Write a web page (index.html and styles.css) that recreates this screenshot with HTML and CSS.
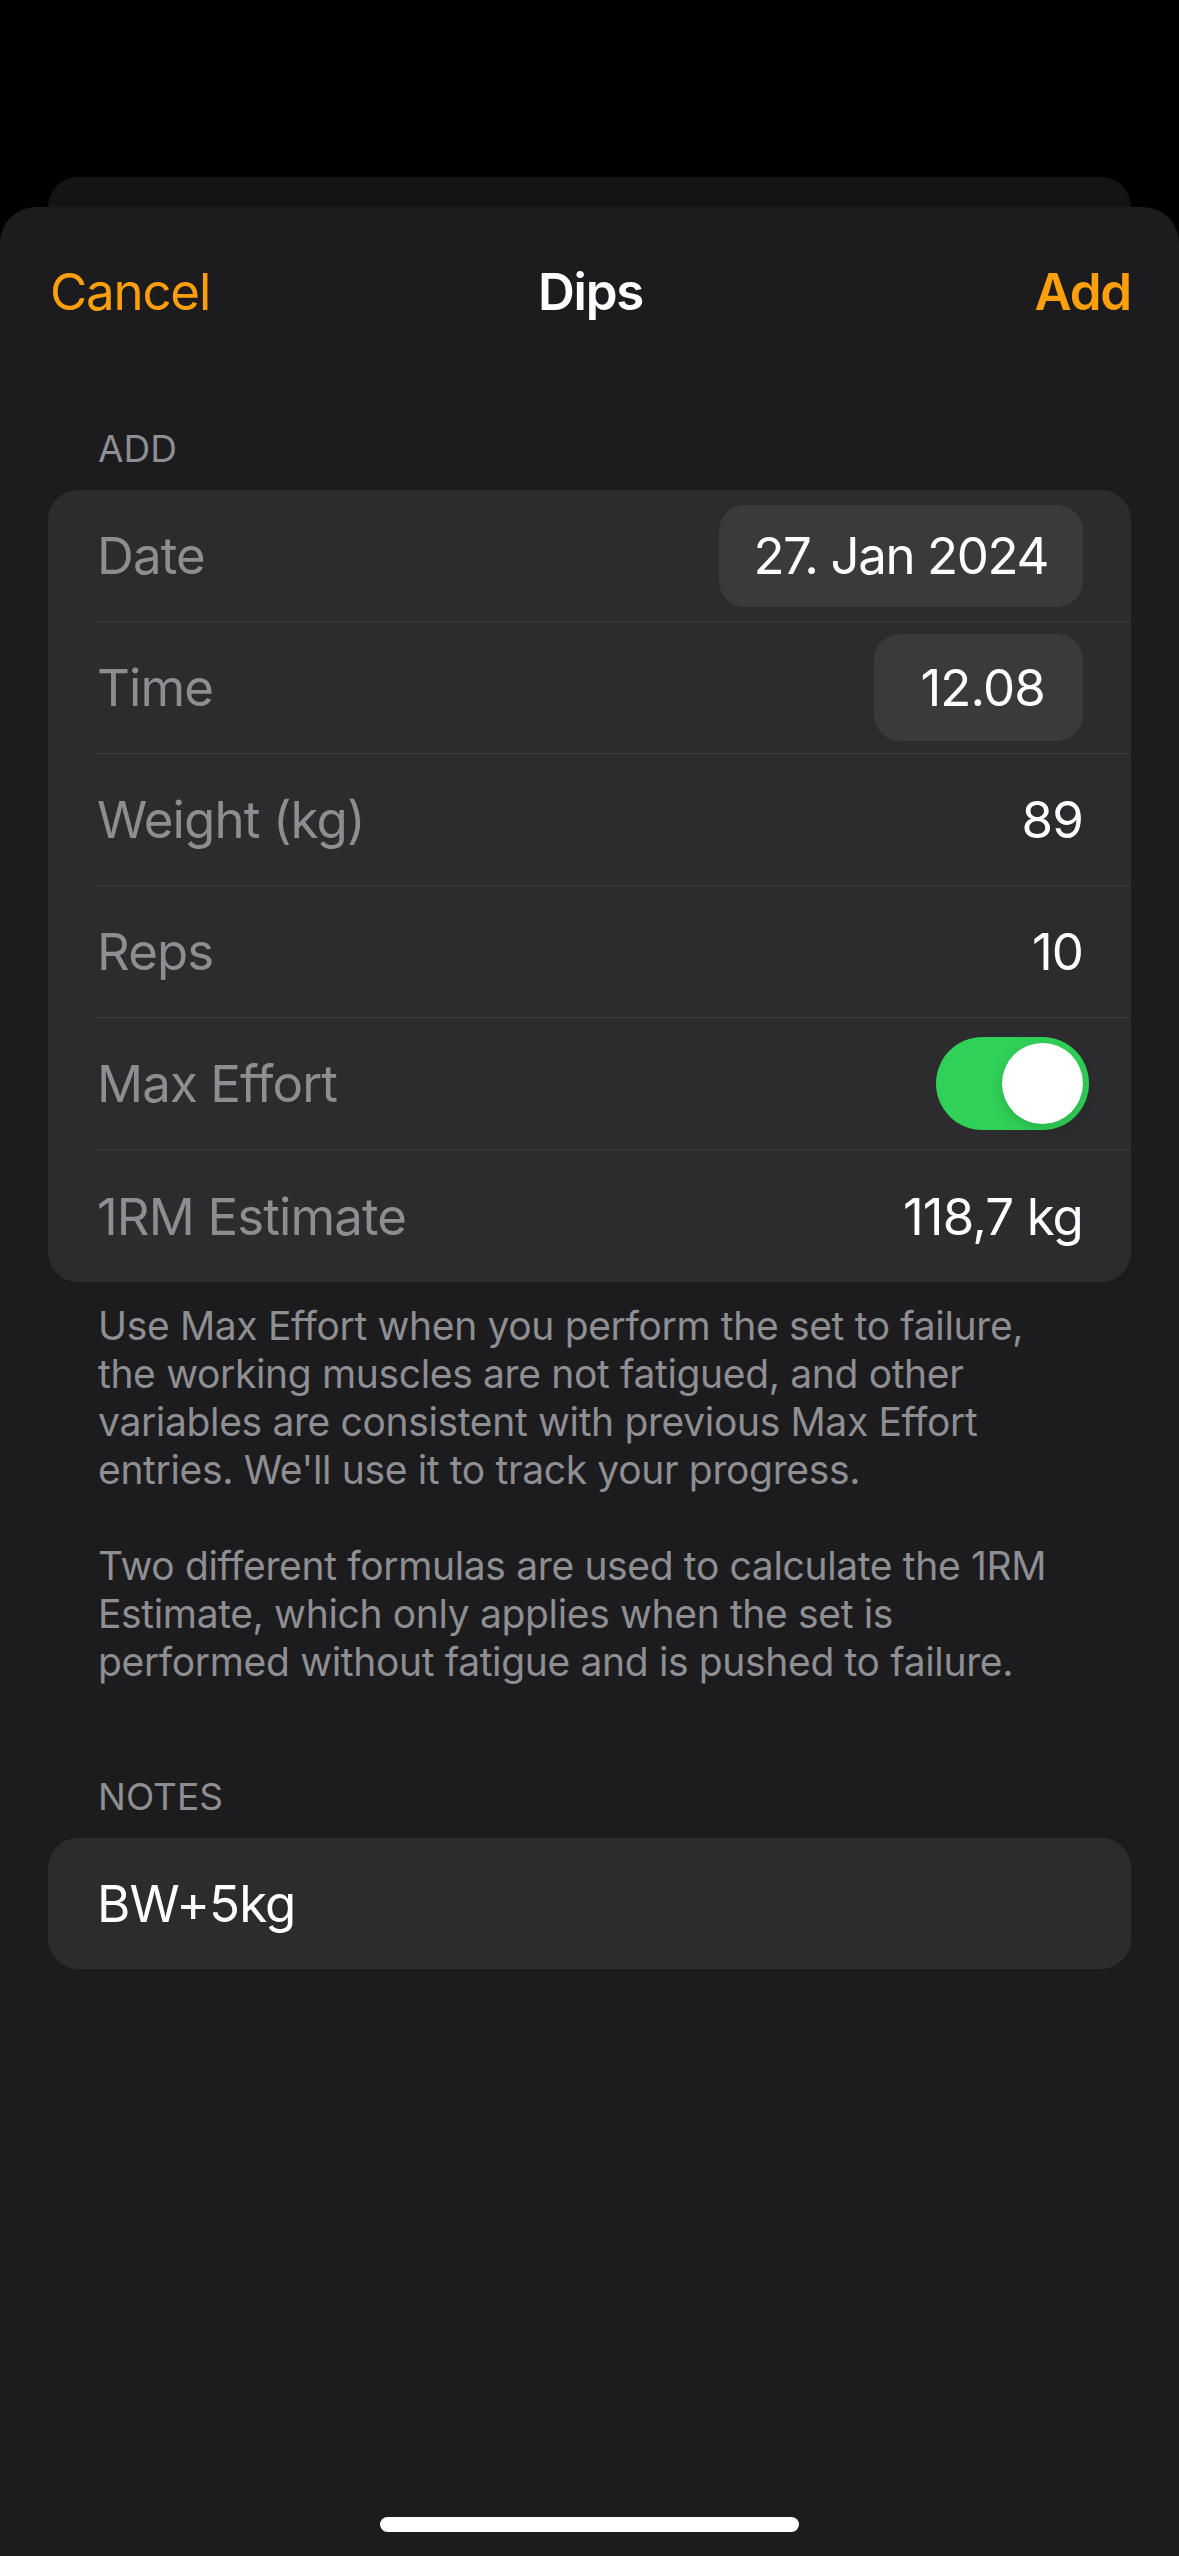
FILE: index.html
```html
<!DOCTYPE html>
<html lang="en">
<head>
<meta charset="utf-8">
<title>Dips</title>
<link rel="stylesheet" href="styles.css">
</head>
<body>
<div class="screen">
  <div class="back-card"></div>
  <div class="sheet">
    <div class="nav">
      <span class="nav-btn nav-left">Cancel</span>
      <span class="nav-title">Dips</span>
      <span class="nav-btn nav-btn-strong nav-right">Add</span>
    </div>

    <div class="section-header">ADD</div>
    <div class="card">
      <div class="row"><div class="row-inner">
        <span class="label">Date</span>
        <span class="pill pill-date">27. Jan 2024</span>
      </div></div>
      <div class="row"><div class="row-inner">
        <span class="label">Time</span>
        <span class="pill pill-time">12.08</span>
      </div></div>
      <div class="row"><div class="row-inner">
        <span class="label">Weight (kg)</span>
        <span class="value">89</span>
      </div></div>
      <div class="row"><div class="row-inner">
        <span class="label">Reps</span>
        <span class="value">10</span>
      </div></div>
      <div class="row"><div class="row-inner">
        <span class="label">Max Effort</span>
        <span class="switch"><span class="knob"></span></span>
      </div></div>
      <div class="row"><div class="row-inner">
        <span class="label">1RM Estimate</span>
        <span class="value">118,7 kg</span>
      </div></div>
    </div>
    <div class="footer">
      <p>Use Max Effort when you perform the set to failure,<br>the working muscles are not fatigued, and other<br>variables are consistent with previous Max Effort<br>entries. We'll use it to track your progress.</p>
      <p>Two different formulas are used to calculate the 1RM<br>Estimate, which only applies when the set is<br>performed without fatigue and is pushed to failure.</p>
    </div>

    <div class="section-header section-header-notes">NOTES</div>
    <div class="card">
      <div class="note">BW+5kg</div>
    </div>

    <div class="home-indicator"></div>
  </div>
</div>
</body>
</html>
```

FILE: styles.css
```css
* { box-sizing: border-box; }

html, body {
  margin: 0;
  padding: 0;
  background: #000;
}

body {
  font-family: Inter, "Noto Sans", "Liberation Sans", sans-serif;
  color: #fff;
}

.screen {
  width: 1179px;
  height: 2556px;
  overflow: hidden;
  display: flex;
  flex-direction: column;
  padding-top: 177px;
}

.back-card {
  height: 30px;
  margin: 0 48px;
  background: #141414;
  border-radius: 30px 30px 0 0;
  flex: none;
}

.sheet {
  flex: 1;
  background: #1c1c1e;
  border-radius: 36px 36px 0 0;
  display: flex;
  flex-direction: column;
}

.nav {
  display: grid;
  grid-template-columns: 1fr auto 1fr;
  align-items: center;
  padding: 51px 48px 0 50px;
  height: 119px;
  font-size: 51px;
  line-height: 60px;
  letter-spacing: -1.2px;
}

.nav-btn { color: #ff9f0a; }
.nav-left { justify-self: start; }
.nav-right { justify-self: end; }
.nav-btn-strong { font-weight: 600; }
.nav-title {
  font-weight: 600;
  color: #fff;
}

.section-header {
  margin-top: 101px;
  padding-left: 98px;
  font-size: 37px;
  line-height: 44px;
  color: #8e8e93;
}

.card {
  margin: 19px 48px 0;
  background: #2c2c2e;
  border-radius: 30px;
  overflow: hidden;
}

.row {
  padding-left: 49px;
}

.row-inner {
  height: 132px;
  display: flex;
  align-items: center;
  justify-content: space-between;
  padding-right: 48px;
  border-bottom: 1px solid #3d3d40;
  font-size: 51px;
  letter-spacing: -0.9px;
}

.row:last-child .row-inner { border-bottom: none; }

.label { color: #8d8d92; }

.value { color: #fff; }

.pill {
  display: inline-flex;
  align-items: center;
  background: #3a3a3c;
  border-radius: 26px;
  color: #fff;
}

.pill-date {
  height: 102px;
  padding: 0 35px 0 34px;
  letter-spacing: -1.4px;
}

.pill-time {
  height: 107px;
  padding: 0 38px 0 47px;
}

.switch {
  width: 153px;
  height: 93px;
  border-radius: 47px;
  background: #30d158;
  margin-right: -6px;
  display: flex;
  align-items: center;
  justify-content: flex-end;
  padding-right: 6px;
}

.knob {
  width: 81px;
  height: 81px;
  border-radius: 50%;
  background: #fff;
  box-shadow: 0 5px 14px rgba(0, 0, 0, 0.15), 0 0 1px rgba(0, 0, 0, 0.1);
}

.footer {
  padding: 20px 60px 0 98px;
  font-size: 39px;
  line-height: 48px;
  color: #8e8e93;
  letter-spacing: -0.35px;
}

.footer p { margin: 0 0 48px; white-space: nowrap; }
.footer p:last-child { margin-bottom: 0; }

.section-header-notes { margin-top: 89px; }

.note {
  height: 131px;
  display: flex;
  align-items: center;
  padding-left: 49px;
  font-size: 51px;
  letter-spacing: -0.9px;
  color: #fff;
}

.home-indicator {
  margin: auto auto 24px;
  width: 419px;
  height: 15px;
  border-radius: 8px;
  background: #fff;
}
```
